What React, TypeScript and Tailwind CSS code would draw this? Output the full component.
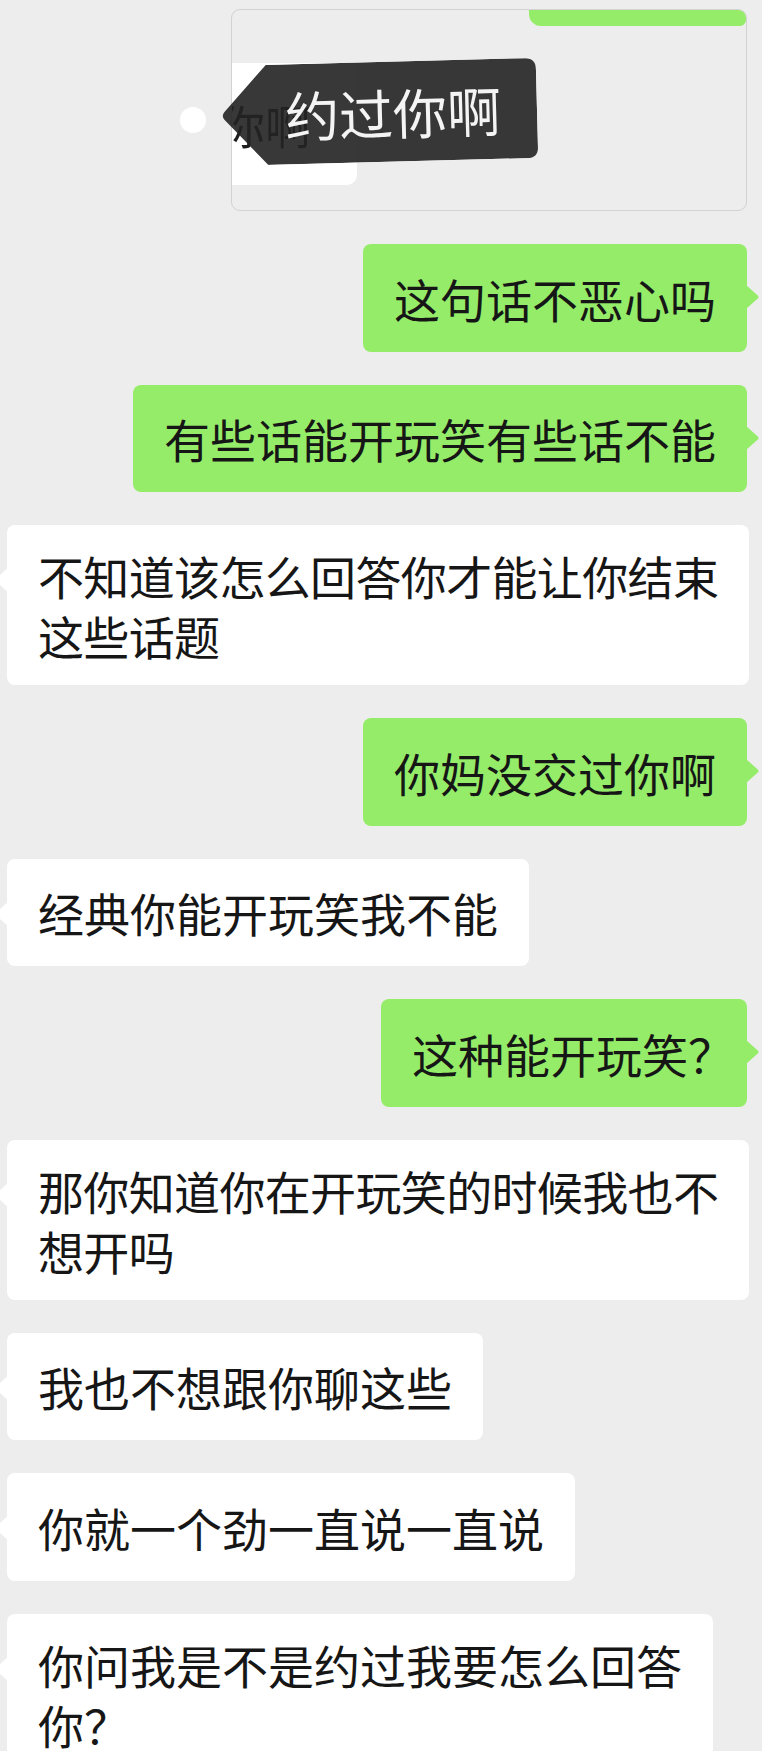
import React from "react";

function TailRight({ color }: { color: string }) {
  return (
    <svg
      className="absolute right-[-13px] top-[41px]"
      width="14"
      height="24"
      viewBox="0 0 14 24"
    >
      <path d="M0 0 L11.5 10.2 Q13.6 12 11.5 13.8 L0 24 Z" fill={color} />
    </svg>
  );
}

function TailLeft({ color }: { color: string }) {
  return (
    <svg
      className="absolute left-[-13px] top-[43px]"
      width="14"
      height="24"
      viewBox="0 0 14 24"
    >
      <path d="M14 0 L2.5 10.2 Q0.4 12 2.5 13.8 L14 24 Z" fill={color} />
    </svg>
  );
}

function Mine({ children }: { children: React.ReactNode }) {
  return (
    <div className="flex justify-end pr-[15px]">
      <div className="relative bg-[#95ec69] rounded-[8px] px-[31px] py-[23.75px] text-[46px] leading-[60px] text-[#161616] whitespace-nowrap">
        {children}
        <TailRight color="#95ec69" />
      </div>
    </div>
  );
}

function Theirs({
  children,
  multi,
  tight,
}: {
  children: React.ReactNode;
  multi?: boolean;
  tight?: boolean;
}) {
  const base =
    "relative bg-white rounded-[8px] px-[31px] text-[46px] leading-[60px] text-[#161616] whitespace-nowrap";
  return (
    <div className="flex justify-start pl-[7px]">
      <div
        className={clsxLike(
          base,
          multi ? "py-[20px]" : "py-[23.75px]",
          tight ? "tracking-[-0.65px]" : ""
        )}
      >
        {children}
        <TailLeft color="#ffffff" />
      </div>
    </div>
  );
}

function clsxLike(...parts: string[]) {
  return parts.filter(Boolean).join(" ");
}

export default function App() {
  return (
    <div className="w-[762px] h-[1751px] overflow-hidden bg-[#ededed] font-['Noto_Sans_CJK_SC','Noto_Sans',sans-serif]">
      <div className="pt-[9px] flex flex-col gap-[33px]">
        {/* quoted message thumbnail */}
        <div className="relative h-[202px]">
          <div className="ml-[231px] w-[516px] h-[202px] border border-[#d2d2d2] rounded-[9px] overflow-hidden flex flex-col bg-[#ededed]">
            <div className="self-end w-[217px] h-[16px] bg-[#95ec69] rounded-bl-[12px] rounded-br-[6px]" />
            <div className="mt-[37px] ml-[-39px] w-[164px] h-[122px] bg-white rounded-[10px] flex items-center pl-[26px] text-[46px] leading-none text-[#1e1e1e] whitespace-nowrap blur-[0.6px]">
              你啊
            </div>
          </div>
          {/* white dot */}
          <div className="absolute left-[180px] top-[98px] w-[26px] h-[26px] rounded-full bg-white" />
          {/* dark tag */}
          <div className="absolute left-[221px] top-[53px] w-[316px] h-[100px] rotate-[-1.5deg]">
            <svg
              className="absolute inset-0"
              width="316"
              height="100"
              viewBox="0 0 316 100"
            >
              <path
                d="M46 0 H305 Q316 0 316 11 V89 Q316 100 305 100 H46 L3.5 54 Q0 50 3.5 46 Z"
                fill="rgba(34,34,34,0.9)"
              />
            </svg>
            <div className="relative h-full flex items-center pl-[64px] text-[54px] leading-none text-[#f4f4f4] whitespace-nowrap">
              约过你啊
            </div>
          </div>
        </div>

        <Mine>这句话不恶心吗</Mine>
        <Mine>有些话能开玩笑有些话不能</Mine>
        <Theirs multi tight>
          不知道该怎么回答你才能让你结束
          <br />
          这些话题
        </Theirs>
        <Mine>你妈没交过你啊</Mine>
        <Theirs>经典你能开玩笑我不能</Theirs>
        <Mine>
          这种能开玩笑<span className="mr-[-18px]">？</span>
        </Mine>
        <Theirs multi tight>
          那你知道你在开玩笑的时候我也不
          <br />
          想开吗
        </Theirs>
        <Theirs>我也不想跟你聊这些</Theirs>
        <Theirs>你就一个劲一直说一直说</Theirs>
        <Theirs multi>
          你问我是不是约过我要怎么回答
          <br />
          你？
        </Theirs>
      </div>
    </div>
  );
}
